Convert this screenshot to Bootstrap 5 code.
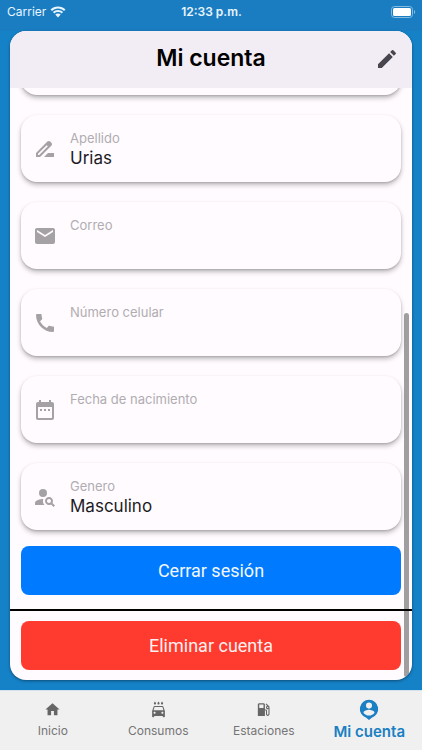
<!DOCTYPE html>
<html lang="es">
<head>
<meta charset="utf-8">
<meta name="viewport" content="width=device-width, initial-scale=1">
<title>Mi cuenta</title>
<link href="https://cdn.jsdelivr.net/npm/bootstrap@5.3.0/dist/css/bootstrap.min.css" rel="stylesheet">
<style>
  body { background: #1581c6; font-family: Inter, "Liberation Sans", sans-serif; }
  svg { fill: currentColor; display: block; flex: none; }
  .status { height: 31px; padding: 0 6px 8px 7px; font-size: 12px; background: #1a7dc2; color: #e9f5fd; }
  .status-side { flex: 1 1 0; }
  .panel { margin: 0 10px 10px; border-radius: 16px; background: #fffbff; box-shadow: 0 1px 3px rgba(0,0,0,.4); min-height: 0; }
  .panel-head { height: 57px; background: #f2edf5; }
  .panel-head h1 { font-size: 23px; line-height: 28px; font-weight: 600; color: #000; padding-bottom: 4px; }
  .edit-btn { right: 5px; top: 8px; padding: 8px; color: #49454f; }
  .scroll-area { min-height: 0; }
  .fields { gap: 20px; padding: 0 11px 16px; }
  .field { height: 67px; flex: none; border-radius: 16px; background: #fffbff; padding: 16px 12px; gap: 13px; color: #a5a2a6; box-shadow: 0 3px 5px rgba(0,0,0,.25), 0 1px 2px rgba(0,0,0,.15); }
  .field svg { margin-top: 6px; }
  .field-label { font-size: 13px; line-height: 15px; color: #b0adb1; }
  .field-input { font-size: 17px; line-height: 24px; height: 24px; color: #1d1b1f; outline: 0; }
  .action { height: 49px; flex: none; margin: 0 11px; border-radius: 8px; font-family: Roboto, "Liberation Sans", sans-serif; font-size: 18px; color: #fff; }
  .action-blue, .action-blue:hover { background: #007aff; color: #f2f8ff; }
  .action-red, .action-red:hover { background: #ff3b30; color: #fff0ef; }
  .rule { height: 2px; flex: none; margin: 14px 0 10px; background: #000; border: 0; opacity: 1; }
  .panel-end { height: 10px; flex: none; }
  .thumb { width: 5px; right: 3px; top: 38%; bottom: 3px; border-radius: 3px; background: rgba(0,0,0,.37); }
  .tabs { height: 60px; flex: none; background: #f0f0f0; border-top: 1px solid #d3e3ee; }
  .tab { flex: 1 1 0; padding-top: 10px; gap: 4px; color: #757575; font-size: 12px; line-height: 18px; }
  .tab svg { color: #666; }
  .tab-on, .tab-on svg { color: #1a7fc3; }
  .tab-on { font-size: 15px; font-weight: 600; padding-top: 7px; gap: 3px; }
</style>
<script src="https://cdn.jsdelivr.net/npm/bootstrap@5.3.0/dist/js/bootstrap.bundle.min.js"></script>
</head>
<body class="d-flex flex-column vh-100 overflow-hidden">
<div class="status d-flex align-items-center flex-shrink-0">
  <div class="status-side d-flex align-items-center gap-1"><span>Carrier</span>
    <svg width="16" height="12" viewBox="0 0 16 12" aria-hidden="true"><path d="M8 .5C5 .5 2.4 1.6.5 3.500L2 5c1.600-1.500 3.700-2.400 6-2.400s4.400.900 6 2.400l1.500-1.500C13.600 1.600 11 .5 8 .5zM8 4C6 4 4.200 4.800 2.900 6l1.500 1.500C5.300 6.600 6.600 6.100 8 6.100s2.700.500 3.600 1.400L13.100 6C11.800 4.800 10 4 8 4zM8 7.500c-1 0-2 .400-2.700 1L8 11.400l2.700-2.900c-.700-.600-1.700-1-2.700-1z"/></svg>
  </div>
  <span class="fw-semibold">12:33 p.m.</span>
  <div class="status-side d-flex justify-content-end">
    <svg width="25" height="12" viewBox="0 0 25 12" aria-label="Batería"><rect x=".5" y=".5" width="21" height="11" rx="3" fill="none" stroke="#82bce2"/><rect x="2" y="2" width="18" height="8" rx="1.500" fill="#fff"/><path d="M23 4v4c1.600-.700 1.600-3.300 0-4z" fill="#82bce2"/></svg>
  </div>
</div>

<main class="panel d-flex flex-column flex-grow-1 overflow-hidden">
  <header class="panel-head d-flex align-items-center justify-content-center position-relative flex-shrink-0">
    <h1 class="m-0">Mi cuenta</h1>
    <button type="button" class="edit-btn btn border-0 position-absolute" aria-label="Editar"><svg width="24" height="24" viewBox="0 0 24 24"><path d="M3 17.250V21h3.750L17.810 9.940l-3.750-3.750L3 17.250zM20.710 7.040a.996.996 0 0 0 0-1.410l-2.340-2.340a.996.996 0 0 0-1.410 0l-1.830 1.830 3.750 3.750 1.830-1.830z"/></svg></button>
  </header>
  <div class="scroll-area position-relative d-flex flex-column justify-content-end flex-grow-1 overflow-hidden">
    <div class="fields d-flex flex-column">
      <div class="field"></div>
      <label class="field d-flex align-items-start">
        <svg width="24" height="24" viewBox="0 0 24 24"><path d="M18.410 5.800L17.200 4.590c-.780-.780-2.050-.780-2.830 0l-2.680 2.680L3 15.960V20h4.040l8.740-8.740 2.630-2.630c.790-.780.790-2.050 0-2.830zM6.210 18H5v-1.210l8.660-8.660 1.210 1.210L6.210 18zM11 20l4-4h6v4H11z"/></svg>
        <span class="d-flex flex-column flex-grow-1"><span class="field-label">Apellido</span><input class="field-input border-0 bg-transparent p-0 w-100" type="text" value="Urias" readonly></span>
      </label>
      <label class="field d-flex align-items-start">
        <svg width="24" height="24" viewBox="0 0 24 24"><path d="M20 4H4c-1.100 0-1.990.900-1.990 2L2 18c0 1.100.900 2 2 2h16c1.100 0 2-.900 2-2V6c0-1.100-.900-2-2-2zm0 4l-8 5-8-5V6l8 5 8-5v2z"/></svg>
        <span class="d-flex flex-column flex-grow-1"><span class="field-label">Correo</span><input class="field-input border-0 bg-transparent p-0 w-100" type="email" readonly></span>
      </label>
      <label class="field d-flex align-items-start">
        <svg width="24" height="24" viewBox="0 0 24 24"><path d="M20.010 15.380c-1.230 0-2.420-.200-3.530-.560-.350-.120-.740-.030-1.010.240l-1.570 1.970c-2.830-1.350-5.480-3.900-6.890-6.830l1.950-1.660c.270-.280.350-.670.240-1.020-.370-1.110-.560-2.300-.560-3.530 0-.540-.450-.990-.990-.990H4.190C3.650 3 3 3.240 3 3.990 3 13.280 10.730 21 20.010 21c.710 0 .990-.630.990-1.180v-3.450c0-.540-.450-.990-.990-.990z"/></svg>
        <span class="d-flex flex-column flex-grow-1"><span class="field-label">Número celular</span><input class="field-input border-0 bg-transparent p-0 w-100" type="tel" readonly></span>
      </label>
      <label class="field d-flex align-items-start">
        <svg width="24" height="24" viewBox="0 0 24 24"><path d="M9 11H7v2h2v-2zm4 0h-2v2h2v-2zm4 0h-2v2h2v-2zm2-7h-1V2h-2v2H8V2H6v2H5c-1.110 0-1.990.900-1.990 2L3 20c0 1.100.890 2 2 2h14c1.100 0 2-.900 2-2V6c0-1.100-.900-2-2-2zm0 16H5V9h14v11z"/></svg>
        <span class="d-flex flex-column flex-grow-1"><span class="field-label">Fecha de nacimiento</span><input class="field-input border-0 bg-transparent p-0 w-100" type="text" readonly></span>
      </label>
      <label class="field d-flex align-items-start">
        <svg width="24" height="24" viewBox="0 0 24 24"><circle cx="10" cy="8" r="4"/><path d="M10.350 14.010C7.620 13.910 2 15.270 2 18v2h9.540c-2.470-2.760-1.230-5.890-1.190-5.990zM19.430 18.020c.360-.590.570-1.280.570-2.020 0-2.210-1.790-4-4-4s-4 1.790-4 4 1.790 4 4 4c.740 0 1.430-.220 2.020-.570L20.590 22 22 20.590l-2.570-2.570zM16 18c-1.100 0-2-.900-2-2s.900-2 2-2 2 .900 2 2-.900 2-2 2z"/></svg>
        <span class="d-flex flex-column flex-grow-1"><span class="field-label">Genero</span><input class="field-input border-0 bg-transparent p-0 w-100" type="text" value="Masculino" readonly></span>
      </label>
    </div>
    <button type="button" class="action action-blue btn border-0 p-0">Cerrar sesión</button>
    <hr class="rule">
    <button type="button" class="action action-red btn border-0 p-0">Eliminar cuenta</button>
    <div class="panel-end"></div>
    <div class="thumb position-absolute"></div>
  </div>
</main>

<nav class="tabs d-flex" aria-label="Principal">
  <a href="#inicio" class="tab d-flex flex-column align-items-center text-decoration-none"><svg width="17" height="17" viewBox="0 0 24 24"><path d="M10 20v-6h4v6h5v-8h3L12 3 2 12h3v8z"/></svg>Inicio</a>
  <a href="#consumos" class="tab d-flex flex-column align-items-center text-decoration-none"><svg width="17" height="17" viewBox="0 0 24 24"><path d="M17 5c.830 0 1.500-.670 1.500-1.500 0-1-1.500-2.700-1.500-2.700s-1.500 1.700-1.500 2.700c0 .830.670 1.500 1.500 1.500zM12 5c.830 0 1.500-.670 1.500-1.500 0-1-1.500-2.700-1.500-2.700s-1.500 1.700-1.500 2.700c0 .830.670 1.500 1.500 1.500zM7 5c.830 0 1.500-.670 1.500-1.500C8.500 2.500 7 .8 7 .8S5.500 2.500 5.500 3.500C5.500 4.330 6.170 5 7 5zM18.920 8.010C18.720 7.420 18.160 7 17.500 7h-11c-.660 0-1.210.420-1.420 1.010L3 14v8c0 .550.450 1 1 1h1c.550 0 1-.450 1-1v-1h12v1c0 .550.450 1 1 1h1c.550 0 1-.450 1-1v-8l-2.080-5.990zM6.500 18c-.830 0-1.500-.670-1.500-1.500S5.670 15 6.500 15s1.500.670 1.500 1.500S7.330 18 6.500 18zm11 0c-.830 0-1.500-.670-1.500-1.500s.670-1.500 1.500-1.500 1.500.670 1.500 1.500-.670 1.500-1.500 1.500zM5 13l1.500-4.500h11L19 13H5z"/></svg>Consumos</a>
  <a href="#estaciones" class="tab d-flex flex-column align-items-center text-decoration-none"><svg width="17" height="17" viewBox="0 0 24 24"><path d="M19.770 7.230l.010-.010-3.720-3.720L15 4.560l2.110 2.110c-.940.360-1.610 1.260-1.610 2.330 0 1.380 1.120 2.500 2.500 2.500.360 0 .690-.080 1-.210v7.210c0 .550-.450 1-1 1s-1-.450-1-1V14c0-1.100-.900-2-2-2h-1V5c0-1.100-.900-2-2-2H6c-1.100 0-2 .900-2 2v16h10v-7.500h1.500v5c0 1.380 1.120 2.500 2.500 2.500s2.500-1.120 2.500-2.500V9c0-.690-.280-1.320-.730-1.770zM12 10H6V5h6v5zm6 0c-.550 0-1-.450-1-1s.450-1 1-1 1 .450 1 1-.450 1-1 1z"/></svg>Estaciones</a>
  <a href="#cuenta" class="tab tab-on d-flex flex-column align-items-center text-decoration-none" aria-current="page"><svg width="22" height="22" viewBox="0 0 24 24"><path fill-rule="evenodd" d="M12 2a10 10 0 0 0-3 19.540L12 24l3-2.460A10 10 0 0 0 12 2zM12 5a3.300 3.300 0 1 1 0 6.600A3.300 3.300 0 0 1 12 5zM12 19.200c-2.500 0-4.700-1.300-6-3.200 0-2 4-3.100 6-3.100s6 1.100 6 3.100c-1.300 1.900-3.500 3.200-6 3.200z"/></svg>Mi cuenta</a>
</nav>
</body>
</html>
